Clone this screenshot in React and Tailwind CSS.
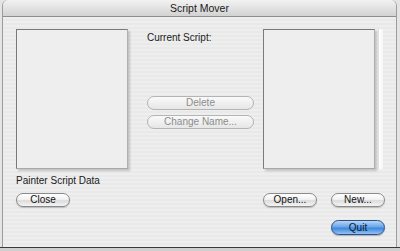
export default function App() {
  const font = { fontFamily: '"Liberation Sans", Arial, sans-serif' };

  const pill =
    'h-[14px] rounded-full border border-[#8a8a8a] bg-[linear-gradient(180deg,#ffffff_0%,#f2f2f2_45%,#dcdcdc_55%,#f4f4f4_100%)] text-[10px] leading-[12px] text-[#111] flex items-center justify-center shadow-[0_1px_1px_rgba(0,0,0,0.2)]';
  const pillDisabled =
    'h-[14px] rounded-full border border-[#b4b4b4] bg-[linear-gradient(180deg,#fafafa_0%,#f0f0f0_50%,#e6e6e6_100%)] text-[10px] leading-[12px] text-[#8c8c8c] flex items-center justify-center';
  const listBox =
    'w-[112px] h-[140px] bg-[#eeeeee] border-t border-l border-[#7a7a7a] border-r border-b border-r-[#b0b0b0] border-b-[#a8a8a8] shadow-[2px_2px_2px_rgba(0,0,0,0.18)]';

  return (
    <div className="w-[400px] h-[251px] bg-[#cfcfcf] overflow-hidden" style={font}>
      <div className="w-[400px] h-[248px] bg-[#e4e4e4] pl-[2px] pr-[3px] border-b border-[#3a3a3a]">
        <div className="w-[395px] h-[247px] rounded-t-[6px] overflow-hidden border-l border-r border-[#9c9c9c] flex flex-col">
          {/* Title bar */}
          <div className="h-[17px] shrink-0 bg-[linear-gradient(180deg,#f2f2f2_0%,#e2e2e2_50%,#d2d2d2_100%)] border-b border-[#8e8e8e] flex items-center justify-center">
            <span className="text-[10.5px] text-[#1a1a1a] leading-none">Script Mover</span>
          </div>

          {/* Body */}
          <div className="flex-1 bg-[repeating-linear-gradient(180deg,#eeeeee_0px,#eeeeee_2px,#e9e9e9_2px,#e9e9e9_4px)] pl-[13px] pt-[12px]">
            <div className="flex items-start">
              <div className={listBox} />

              <div className="ml-[19px] w-[107px] h-[140px] flex flex-col">
                <div className="pt-[3px] text-[10px] leading-[12px] text-[#1a1a1a]">Current Script:</div>
                <div className={pillDisabled + ' mt-[52px]'}>Delete</div>
                <div className={pillDisabled + ' mt-[5px]'}>Change Name...</div>
              </div>

              <div className={listBox + ' ml-[9px]'} />
              <div className="ml-[3px] w-[5px] h-[140px] bg-[linear-gradient(90deg,#ffffff,#f6f6f6)] border-l border-[#e0e0e0]" />
            </div>

            <div className="mt-[6px] text-[10px] leading-[12px] text-[#1a1a1a]">Painter Script Data</div>

            <div className="mt-[6px] flex items-center">
              <div className={pill + ' w-[54px]'}>Close</div>
              <div className={pill + ' w-[54px] ml-[193px]'}>Open...</div>
              <div className={pill + ' w-[54px] ml-[14px]'}>New...</div>
            </div>

            <div className="mt-[13px] flex">
              <div className="ml-[315px] w-[54px] h-[15px] rounded-full border border-[#2d4f86] bg-[linear-gradient(180deg,#b6d6f6_0%,#6aa6ea_45%,#3f86dc_55%,#8ec4f6_100%)] text-[10px] leading-[12px] text-[#0c1a30] flex items-center justify-center shadow-[0_1px_1px_rgba(0,0,0,0.25)]">
                Quit
              </div>
            </div>
          </div>
        </div>
      </div>
    </div>
  );
}
